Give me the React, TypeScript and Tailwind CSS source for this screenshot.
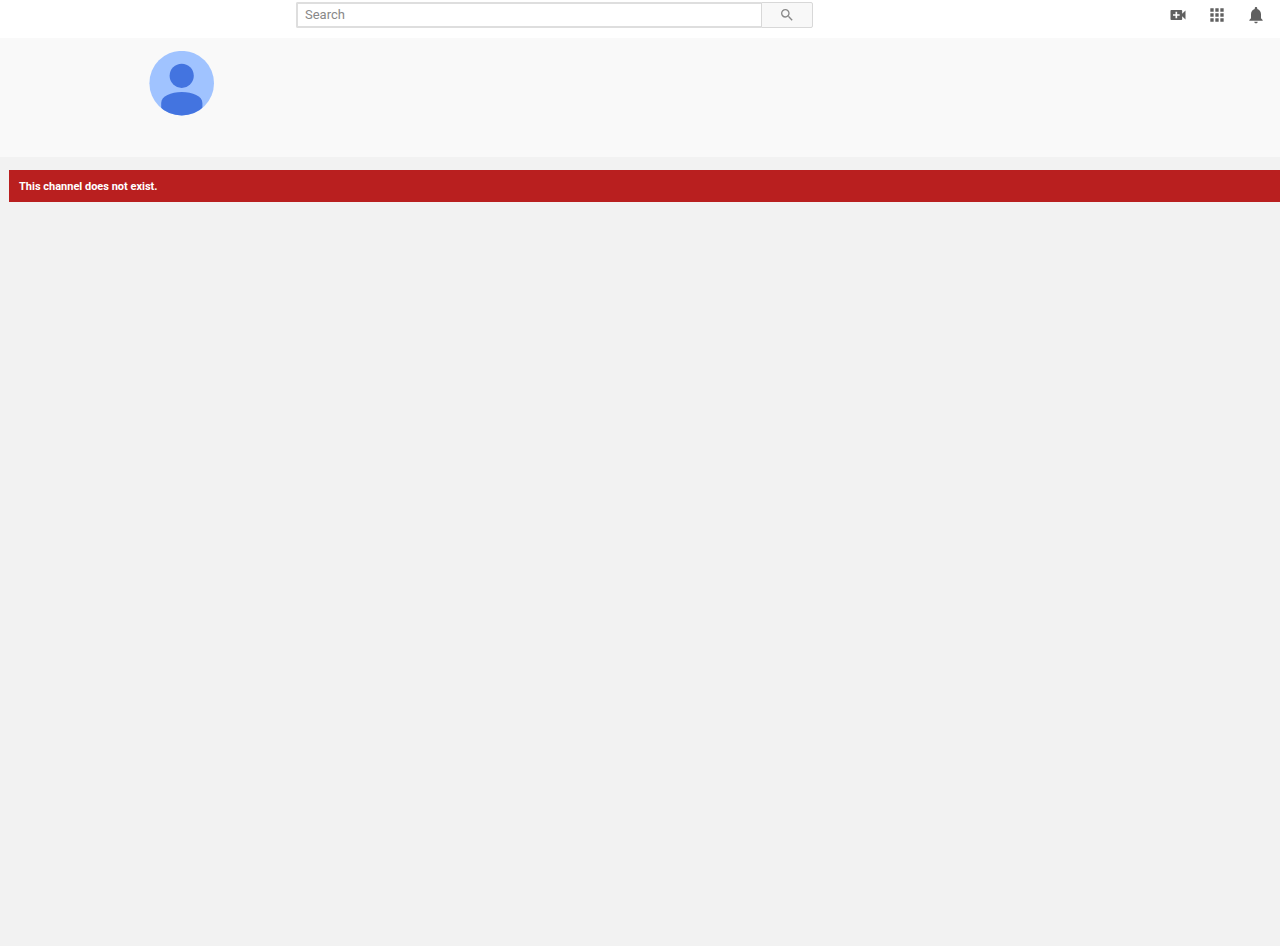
import React from "react";

type IconProps = { path: string; className: string };

function Icon({ path, className }: IconProps) {
  return (
    <svg viewBox="0 0 24 24" fill="currentColor" aria-hidden="true" className={className}>
      <path d={path} />
    </svg>
  );
}

const SEARCH =
  "M15.5 14h-.79l-.28-.27A6.471 6.471 0 0 0 16 9.5 6.5 6.5 0 1 0 9.5 16c1.61 0 3.09-.59 4.23-1.57l.27.28v.79l5 4.99L20.49 19l-4.99-5zm-6 0C7.01 14 5 11.99 5 9.5S7.01 5 9.5 5 14 7.01 14 9.5 11.99 14 9.5 14z";

const ACTIONS = [
  {
    label: "Create",
    path: "M17 10.5V7c0-.55-.45-1-1-1H4c-.55 0-1 .45-1 1v10c0 .55.45 1 1 1h12c.55 0 1-.45 1-1v-3.5l4 4v-11l-4 4zM14 13h-3v3H9v-3H6v-2h3V8h2v3h3v2z",
  },
  {
    label: "Apps",
    path: "M4 8h4V4H4v4zm6 12h4v-4h-4v4zm-6 0h4v-4H4v4zm0-6h4v-4H4v4zm6 0h4v-4h-4v4zm6-10v4h4V4h-4zm-6 4h4V4h-4v4zm6 6h4v-4h-4v4zm0 6h4v-4h-4v4z",
  },
  {
    label: "Notifications",
    path: "M12 22c1.1 0 2-.9 2-2h-4c0 1.1.89 2 2 2zm6-6v-5c0-3.07-1.64-5.64-4.5-6.32V4c0-.83-.67-1.5-1.5-1.5s-1.5.67-1.5 1.5v.68C7.63 5.36 6 7.92 6 11v5l-2 2v1h16v-1l-2-2z",
  },
];

function Avatar() {
  return (
    <svg viewBox="0 0 65 65" role="img" aria-label="Channel avatar" className="size-[65px]">
      <defs>
        <clipPath id="avatar-circle">
          <circle cx="32.7" cy="32.2" r="32.3" />
        </clipPath>
      </defs>
      <g clipPath="url(#avatar-circle)">
        <rect width="65" height="65" fill="#a0c3ff" />
        <circle cx="32.7" cy="24.8" r="12.1" fill="#4374e0" />
        <path d="M12.2 65V52C12.2 45 22 41 32.8 41S53.4 45 53.4 52V65z" fill="#4374e0" />
      </g>
    </svg>
  );
}

export default function App() {
  return (
    <div className="min-h-screen bg-[#f2f2f2] font-[Roboto,sans-serif]">
      <header className="flex h-[38px] items-start justify-between bg-white pl-[296px] pr-[5px] pt-[2px]">
        <form
          role="search"
          onSubmit={(event) => event.preventDefault()}
          className="flex h-[26px] w-full max-w-[517px]"
        >
          <input
            type="text"
            aria-label="Search"
            placeholder="Search"
            className="min-w-0 flex-1 rounded-l-xs border-2 border-r-0 border-[#dedede] bg-white px-[7px] text-[13px] text-[#333333] outline-none placeholder:text-[#888888]"
          />
          <button
            type="submit"
            aria-label="Submit search"
            className="flex w-[52px] items-center justify-center rounded-r-xs border border-[#d8d8d8] bg-[#f8f8f8] text-[#888888]"
          >
            <Icon path={SEARCH} className="size-4" />
          </button>
        </form>
        <nav aria-label="Account" className="flex h-[26px]">
          {ACTIONS.map(({ label, path }) => (
            <button
              key={label}
              type="button"
              aria-label={label}
              className="flex w-[39px] items-center justify-center text-[#606060]"
            >
              <Icon path={path} className="size-5" />
            </button>
          ))}
        </nav>
      </header>
      <section className="h-[119px] bg-[#f9f9f9] pl-[149px] pt-[13px]">
        <Avatar />
      </section>
      <main className="pl-[9px] pt-[13px]">
        <p
          role="alert"
          className="bg-[#b91f1f] px-[10px] pt-[9px] pb-[7px] text-[11px] leading-4 font-bold text-white"
        >
          This channel does not exist.
        </p>
      </main>
    </div>
  );
}
